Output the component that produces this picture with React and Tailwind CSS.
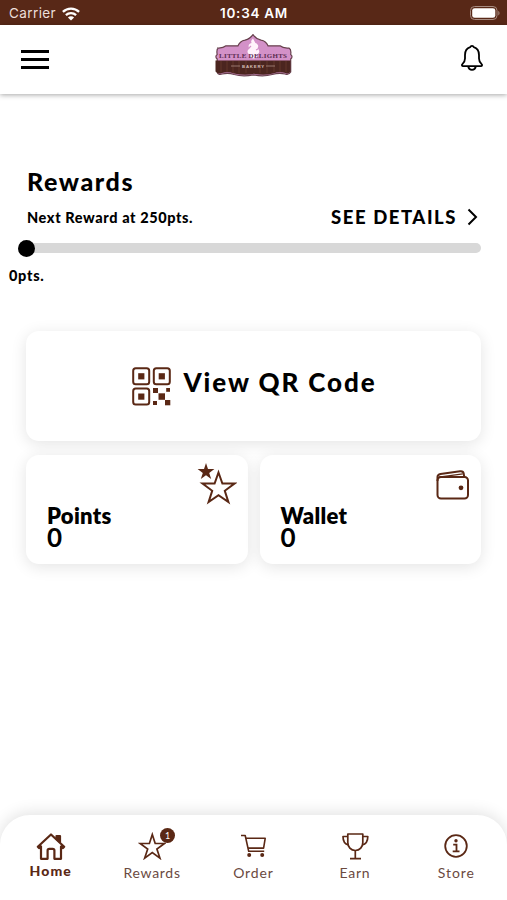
import { clsx } from "clsx";

const BROWN = "#5a2815";

function WifiIcon() {
  return (
    <svg width="18" height="14" viewBox="0 0 18 14" fill="none" stroke="#fff" strokeWidth="2.3">
      <path d="M0.9 4.9a11.6 11.6 0 0 1 16.2 0" />
      <path d="M3.9 8.1a7.4 7.4 0 0 1 10.2 0" />
      <path d="M9 13.6 5.9 10.5a4.4 4.4 0 0 1 6.2 0z" fill="#fff" stroke="none" />
    </svg>
  );
}

function BatteryIcon() {
  return (
    <svg width="31" height="14" viewBox="0 0 31 14">
      <rect x="0.5" y="0.5" width="26.5" height="13" rx="4" fill="none" stroke="#a78b80" />
      <rect x="2.2" y="2.2" width="23.1" height="9.6" rx="2.4" fill="#fff" />
      <path d="M28.3 5v4.4c1.6-.5 1.6-3.9 0-4.4z" fill="#a78b80" />
    </svg>
  );
}

function Logo() {
  return (
    <svg width="80" height="44" viewBox="0 0 80 44">
      <path
        d="M4 14q6 .5 9-2.200h12q2-4.800 7-5.600 5-1.200 8-5.500 3 4.300 8 5.500 5 .8 7 5.600h12q3 2.700 9 2.200 2.500 1.500 1.700 6.500 2.600 2 0 4.500v13q-2.200 3.500-5.500 2-6-1.500-13 .5-9 2.500-19 .3-10 2.200-19-.3-6-2-12-.5-4 1.500-5-2V25q-2.600-2.500 0-4.500-.9-4.500.8-6.500z"
        fill="#d391c8"
        stroke="#67404d"
        strokeWidth="1.200"
      />
      <path
        d="M2.500 26.500h75v11q-2 3-5 1.500-6-1.500-12.500 .5-9 2.500-19 .3-9 2.200-20-.3-6-2-12-.5-4 1.500-6.500-1.500z"
        fill="#4b251f"
      />
      <path d="M8 27v11M14 27v11M20 27v12M26 27v12M33 27v12M47 27v12M54 27v12M61 27v11M67 27v11M73 27v11" stroke="#683a2e" strokeWidth="0.800" />
      <path d="M40 4.500c-2 2-2.200 3-1.400 4.500-3.600 1-3.600 4-2 5.500-2.800 1.500-2.800 5 0 5.800-.4 2.500 1 4 3.600 4.300 3.400-.3 4.600-2 4.200-4.300 2.600-1 2.400-4.500 0-5.800 1.600-2 .8-4.500-2-5.500z" fill="#fff3fb" />
      <path d="M36 14l2-2M43 16l2-1" stroke="#d391c8" strokeWidth="1.200" />
      <text x="40" y="24.300" textAnchor="middle" textLength="68" fontSize="7" fontWeight="700" fill="#5c2c51" className="font-['Liberation_Serif',serif]">
        LITTLE DELIGHTS
      </text>
      <text x="40" y="33.600" textAnchor="middle" textLength="22" fontSize="4.300" fontWeight="700" fill="#d3bdb5" className="font-['Liberation_Sans',sans-serif]">
        BAKERY
      </text>
      <path d="M18 32h9M53 32h9" stroke="#a98c83" strokeWidth="0.800" />
    </svg>
  );
}

function BellIcon() {
  return (
    <svg width="24" height="28" viewBox="0 0 24 28" fill="none" stroke="#000" strokeWidth="1.800" strokeLinejoin="round">
      <path d="M10.200 3.200a1.900 1.900 0 0 1 3.600 0c3.400 1 5.200 4 5.200 7.800v3.500c0 3 1 4.200 2.600 5.600.9.800.5 2-.7 2H3.100c-1.200 0-1.600-1.200-.7-2C4 18.700 5 17.500 5 14.500V11c0-3.800 1.800-6.800 5.200-7.800z" />
      <path d="M8.200 22.500a3.900 4.300 0 0 0 7.600 0" />
    </svg>
  );
}

function QrIcon() {
  return (
    <svg width="39" height="39" viewBox="0 0 39 39" fill="none" stroke={BROWN} strokeWidth="2">
      <rect x="1.200" y="1.200" width="16" height="16" rx="2.500" />
      <rect x="21.800" y="1.200" width="16" height="16" rx="2.500" />
      <rect x="1.200" y="21.500" width="16" height="16" rx="2.500" />
      <g fill={BROWN} stroke="none">
        <rect x="6.200" y="6.200" width="6.200" height="6.200" />
        <rect x="26.700" y="6.200" width="6.200" height="6.200" />
        <rect x="6.200" y="26.500" width="6.200" height="6.200" />
        <rect x="21" y="21" width="5" height="5" />
        <rect x="34.200" y="21" width="3.800" height="3.800" />
        <rect x="26.500" y="26.300" width="6.500" height="6.500" />
        <rect x="21" y="34" width="4" height="4" />
        <rect x="33" y="33" width="5.300" height="5.300" />
      </g>
    </svg>
  );
}

function StarsIcon() {
  return (
    <svg width="40" height="42" viewBox="0 0 40 42">
      <path d="M9 0l2 6h6.400l-5.200 3.900 2 6.100L9 12.300 3.800 16l2-6.100L.6 6H7z" fill={BROWN} />
      <path
        d="M21.500 9.500l3.900 11.100h12.100l-9.700 7.200 3.600 11.300-9.900-6.900-9.900 6.900 3.600-11.300-9.700-7.200h12.100z"
        fill="none"
        stroke={BROWN}
        strokeWidth="2"
      />
    </svg>
  );
}

function WalletIcon() {
  return (
    <svg width="34" height="31" viewBox="0 0 34 31" fill="none" stroke={BROWN} strokeWidth="2" strokeLinejoin="round">
      <rect x="1.500" y="7" width="30.500" height="21.500" rx="3.500" />
      <path d="M1.500 11V7c0-1.800 1-2.700 3-3.100L24 1.300c2-.3 3.400.5 3.700 2.300l.6 3.400" />
      <path d="M3 7.200 26.800 3.800" strokeWidth="1.200" />
      <circle cx="25" cy="17.800" r="2.400" fill={BROWN} stroke="none" />
    </svg>
  );
}

function HomeIcon() {
  return (
    <svg width="30" height="28" viewBox="0 0 30 28" fill="none" stroke={BROWN} strokeWidth="2.200" strokeLinejoin="round">
      <path d="M15 2.500 1.800 14.800l1.200 1.200L5 14.500v12.300h6.600v-8.300c0-1.200.5-1.700 1.700-1.700h3.400c1.200 0 1.700.5 1.700 1.700v8.300H25V14.500l2 1.500 1.200-1.200z" />
      <path d="M20.500 4h3.500v6l-3.500-3z" fill={BROWN} />
    </svg>
  );
}

function StarIcon() {
  return (
    <svg width="28" height="28" viewBox="0 0 28 28" fill="none" stroke={BROWN} strokeWidth="1.700">
      <path d="M14.300 2.500l2.900 9h9.300l-7.600 5.600 3 9-7.600-5.600-7.600 5.600 3-9-7.600-5.600h9.300z" />
    </svg>
  );
}

function CartIcon() {
  return (
    <svg width="28" height="28" viewBox="0 0 28 28" fill="none" stroke={BROWN} strokeWidth="1.600" strokeLinejoin="round">
      <path d="M2 3.500h4.200l3.500 15.800h15.500" />
      <path d="M6.900 6.300h19.300l-1.600 9.800H9" />
      <circle cx="10.200" cy="23" r="2" fill={BROWN} stroke="none" />
      <circle cx="23.200" cy="23" r="2" fill={BROWN} stroke="none" />
    </svg>
  );
}

function TrophyIcon() {
  return (
    <svg width="28" height="28" viewBox="0 0 28 28" fill="none" stroke={BROWN} strokeWidth="1.700" strokeLinejoin="round">
      <path d="M6.800 2h15v8.500c0 4.500-3 8-7.500 8s-7.500-3.500-7.500-8z" />
      <path d="M6.800 4.500H2c0 5 2 7.700 5.500 8.400M21.800 4.500h5c0 5-2 7.700-5.600 8.400" />
      <path d="M14.300 18.500v8M9 26.700h11" />
    </svg>
  );
}

function InfoIcon() {
  return (
    <svg width="24" height="24" viewBox="0 0 24 24" fill="none" stroke={BROWN} strokeWidth="1.800">
      <circle cx="12" cy="12" r="10.800" />
      <circle cx="12" cy="6.700" r="1.700" fill={BROWN} stroke="none" />
      <path d="M9.200 10.700h3.300v6.400M8.700 17.300h6.800" />
    </svg>
  );
}

const tabs = [
  { label: "Home", Icon: HomeIcon, active: true, spacing: "tracking-[1.100px]" },
  { label: "Rewards", Icon: StarIcon, badge: 1, spacing: "tracking-[0.700px]" },
  { label: "Order", Icon: CartIcon, spacing: "tracking-[0.900px]" },
  { label: "Earn", Icon: TrophyIcon, spacing: "tracking-[0.700px]" },
  { label: "Store", Icon: InfoIcon, spacing: "tracking-[0.900px]" },
];

function BalanceCard({ title, titleClass, value, children }) {
  return (
    <div className="flex h-[109px] flex-1 justify-between rounded-[13px] bg-white pl-[21px] shadow-[0_3px_16px_rgba(0,0,0,0.11)]">
      <div className="pt-[49px] font-bold">
        <h3 className={clsx("text-[22px] leading-[24px] font-extrabold", titleClass)}>{title}</h3>
        <p className="text-[26px] leading-[19px]">{value}</p>
      </div>
      {children}
    </div>
  );
}

function App() {
  return (
    <div className="flex h-[900px] w-[507px] flex-col overflow-hidden bg-white font-[Lato,sans-serif] text-black">
      <div className="grid h-[25px] shrink-0 grid-cols-3 items-center bg-[#582817] pr-[6px] pl-[9px] font-[Inter,sans-serif] text-[13.500px] text-white">
        <div className="flex items-center gap-[6px] pt-[2px] text-[#ecdfda]">
          <span className="tracking-[0.400px]">Carrier</span>
          <WifiIcon />
        </div>
        <span className="pt-[2px] pr-[2px] text-center font-semibold tracking-[0.700px] whitespace-nowrap">10:34 AM</span>
        <div className="flex justify-end pt-[1px]">
          <BatteryIcon />
        </div>
      </div>

      <header className="grid h-[69px] shrink-0 grid-cols-3 items-center bg-white pr-[23px] pl-[21px] shadow-[0_1px_5px_rgba(0,0,0,0.35)]">
        <div className="flex w-[28px] flex-col gap-[5px]">
          <span className="h-[3px] bg-black" />
          <span className="h-[3px] bg-black" />
          <span className="h-[3px] bg-black" />
        </div>
        <div className="flex justify-center pb-[7px] pl-[2px]">
          <Logo />
        </div>
        <div className="flex justify-end pb-[3px]">
          <BellIcon />
        </div>
      </header>

      <main className="flex-1 px-[26px] pt-[72px]">
        <h1 className="pl-px text-[25px] leading-[30px] font-black tracking-[1.600px]">Rewards</h1>
        <div className="flex h-[41px] items-center justify-between">
          <span className="pt-[2px] pl-px text-[14.500px] font-black tracking-[0.600px]">Next Reward at 250pts.</span>
          <div className="flex items-center gap-[10px] pr-[3px]">
            <span className="pt-px text-[18.500px] leading-[24px] font-black tracking-[1.550px]">SEE DETAILS</span>
            <svg width="11" height="18" viewBox="0 0 11 18" fill="none" stroke="#000" strokeWidth="2">
              <path d="M1.500 1.500 9 9l-7.500 7.500" />
            </svg>
          </div>
        </div>
        <div className="-ml-[8px] flex h-[22px] items-center">
          <span className="z-10 size-[17px] rounded-full bg-black" />
          <span className="-ml-[9px] h-[10px] flex-1 rounded-full bg-[#d8d8d8]" />
        </div>
        <p className="-ml-[17px] pt-[7px] text-[14.500px] leading-[20px] font-black tracking-[0.700px]">0pts.</p>

        <div className="mt-[45px] flex h-[110px] items-center justify-center gap-[12px] rounded-[13px] bg-white pl-[2px] shadow-[0_3px_16px_rgba(0,0,0,0.11)]">
          <QrIcon />
          <span className="pb-[7px] text-[26px] font-black tracking-[1.900px]">View QR Code</span>
        </div>
        <div className="mt-[14px] flex gap-[12px]">
          <BalanceCard title="Points" titleClass="tracking-[0.300px]" value="0">
            <div className="pt-[8px] pr-[11px]">
              <StarsIcon />
            </div>
          </BalanceCard>
          <BalanceCard title="Wallet" titleClass="tracking-[0.300px]" value="0">
            <div className="pt-[15px] pr-[11px]">
              <WalletIcon />
            </div>
          </BalanceCard>
        </div>
      </main>

      <nav className="grid h-[85px] shrink-0 grid-cols-5 rounded-t-[30px] bg-white text-[14px] text-[#6b4a3f] shadow-[0_-2px_16px_rgba(0,0,0,0.12)]">
        {tabs.map(({ label, Icon, active, badge, spacing }) => (
          <div key={label} className="flex flex-col items-center pt-[17px]">
            <div className="relative flex h-[28px] items-center">
              <Icon />
              {badge && (
                <span className="absolute -top-[4px] left-[22px] flex size-[15px] items-center justify-center rounded-full bg-[#5a2815] text-[9px] text-white">
                  {badge}
                </span>
              )}
            </div>
            <span className={clsx(spacing, active ? "font-black text-[#5a2815]" : "pt-[2px]")}>{label}</span>
          </div>
        ))}
      </nav>
    </div>
  );
}

export default App;
